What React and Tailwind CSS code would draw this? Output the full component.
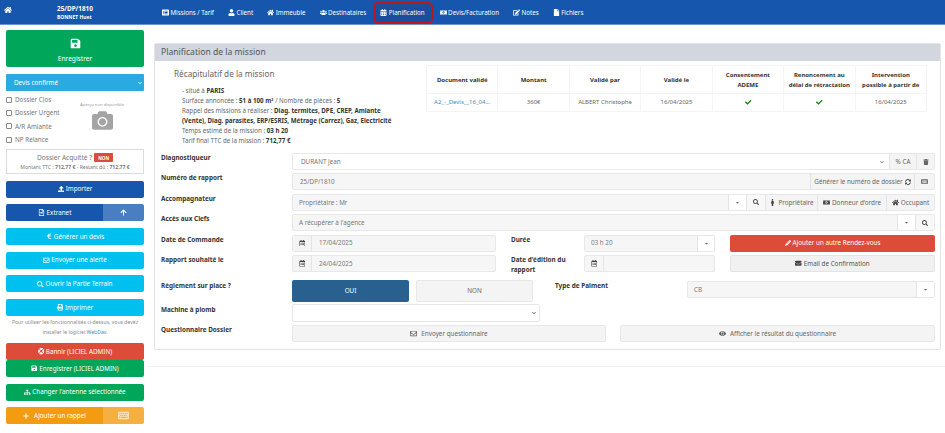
import React from "react";
import {
  FaHome, FaSave, FaCalendarAlt, FaUser, FaUsers, FaMoneyBillAlt, FaEdit, FaFile, FaUpload, FaRegFileAlt, FaListAlt,
  FaArrowUp, FaEuroSign, FaRegEnvelope, FaEnvelope, FaSearch, FaPrint, FaLifeRing, FaSitemap, FaPlus,
  FaTrash, FaSyncAlt, FaKeyboard, FaMale, FaCaretDown, FaChevronDown, FaPencilAlt, FaEye, FaCheck, FaCamera,
  FaRegCalendarAlt,
} from "react-icons/fa";

const font = { fontFamily: '"Noto Sans", "Open Sans", sans-serif' };

function NavItem({ icon: Icon, label, active }) {
  return (
    <div className={"flex items-center gap-[1.5px] h-[22px] pl-[5px] rounded-[5px] border-2 " + (active ? "pr-[6px] border-[#c0151f] bg-[#1a4f9e]" : "pr-[5px] border-transparent")}>
      <Icon className="text-[7px]" />
      <span>{label}</span>
    </div>
  );
}

function SideBtn({ color, icon: Icon, children, className = "mt-[6.7px]" }) {
  return (
    <div className={"h-[17px] flex items-center justify-center gap-[1.5px] rounded-[2px] text-white text-[6.3px] " + color + " " + className}>
      {Icon && <Icon className="text-[6.5px]" />}
      <span>{children}</span>
    </div>
  );
}

function Check({ label }) {
  return (
    <label className="flex items-center gap-[3px] h-[13.3px] text-[6.3px] text-[#777]">
      <span className="w-[6px] h-[6px] border border-[#888] rounded-[1px] bg-white" />
      {label}
    </label>
  );
}

function Field({ children, className = "" }) {
  return <div className={"h-[17px] flex items-center border border-[#e8e8ea] bg-[#f6f6f7] rounded-[2px] text-[6.3px] text-[#777] " + className}>{children}</div>;
}

function Addon({ children, className = "" }) {
  return <div className={"h-full flex items-center justify-center gap-[2px] border-l border-[#e4e4e6] text-[#666] shrink-0 " + className}>{children}</div>;
}

function Label({ children, className = "" }) {
  return <div className={"font-bold text-[6.4px] leading-[10px] text-[#333] " + className}>{children}</div>;
}

function Row({ label, children, className = "mt-[3.4px]", labelClass = "" }) {
  return (
    <div className={"flex " + className}>
      <Label className={"w-[131px] shrink-0 " + labelClass}>{label}</Label>
      <div className="flex-1 min-w-0">{children}</div>
    </div>
  );
}

const heads = [
  ["Document validé"],
  ["Montant"],
  ["Validé par"],
  ["Validé le"],
  ["Consentement", "ADEME"],
  ["Renoncement au", "délai de rétractation"],
  ["Intervention", "possible à partir de"],
];

const cell = "border border-[#f4f4f5]";

export default function App() {
  return (
    <div style={font} className="w-[945px] h-[433px] overflow-hidden bg-white text-[#666] relative">
      <header className="h-[25px] bg-[#1656ac] border-b border-[#6d94c8] text-white flex items-center text-[6.2px]">
        <FaHome className="ml-[4px] text-[8px] mb-[4px] shrink-0" />
        <div className="ml-[45px] w-[98px] font-bold shrink-0 leading-[9px] pt-[1px]">
          <div className="text-[6.4px]">25/DP/1810</div>
          <div className="text-[5px]">BONNET Huet</div>
        </div>
        <div className="flex items-center pt-[1px]">
          <NavItem icon={FaListAlt} label="Missions / Tarif" />
          <NavItem icon={FaUser} label="Client" />
          <NavItem icon={FaHome} label="Immeuble" />
          <NavItem icon={FaUsers} label="Destinataires" />
          <NavItem icon={FaCalendarAlt} label="Planification" active />
          <NavItem icon={FaMoneyBillAlt} label="Devis/Facturation" />
          <NavItem icon={FaEdit} label="Notes" />
          <NavItem icon={FaFile} label="Fichiers" />
        </div>
      </header>

      <div className="flex">
        <aside className="w-[138px] ml-[6px] shrink-0 pt-[5px]">
          <div className="h-[37px] bg-[#00a65a] rounded-[2px] text-white flex flex-col items-center justify-center gap-[6px] text-[6.6px]">
            <FaSave className="text-[11px] mt-[3px]" />
            <span className="leading-[8px]">Enregistrer</span>
          </div>
          <div className="mt-[7px] h-[17px] bg-[#29abe2] text-white text-[6.3px] flex items-center justify-between pl-[8px] pr-[2px] rounded-[1px]">
            <span>Devis confirmé</span>
            <FaChevronDown className="text-[4px]" />
          </div>
          <div className="flex mt-[2px] h-[54px]">
            <div className="w-[66px]">
              <Check label="Dossier Clos" />
              <Check label="Dossier Urgent" />
              <Check label="A/R Amiante" />
              <Check label="NP Relance" />
            </div>
            <div className="flex-1 flex flex-col items-center pt-[9px] text-[4.2px] leading-[6px] text-[#999]">
              <span className="-ml-[12px]">Aperçu non disponible</span>
              <FaCamera className="text-[21px] text-[#a4a4a4] mt-[2px] -ml-[12px]" />
            </div>
          </div>
          <div className="mt-[2px] h-[25px] border border-[#dcdcdc] flex flex-col items-center justify-center text-[#777]">
            <div className="flex items-center gap-[2px] text-[6.6px] leading-[10px]">
              Dossier Acquitté ?
              <span className="bg-[#dd4b39] text-white text-[4.5px] font-bold px-[4px] py-[1.5px] rounded-[1px] leading-[6px]">NON</span>
            </div>
            <div className="text-[5.1px] leading-[8px]">Montant TTC : <b>712,77 €</b> - Restant dû : <b>712,77 €</b></div>
          </div>
          <SideBtn color="bg-[#1656ac]" icon={FaUpload} className="mt-[6.5px]">Importer</SideBtn>
          <div className="mt-[6.7px] h-[17px] flex text-white text-[6.3px] rounded-[2px] overflow-hidden">
            <div className="w-[97px] bg-[#1656ac] flex items-center justify-center gap-[2px]"><FaRegFileAlt className="text-[7px]" />Extranet</div>
            <div className="flex-1 bg-[#4a7ec2] flex items-center justify-center"><FaArrowUp className="text-[7px]" /></div>
          </div>
          <SideBtn color="bg-[#00c0ef]" icon={FaEuroSign}>Générer un devis</SideBtn>
          <SideBtn color="bg-[#00c0ef]" icon={FaRegEnvelope}>Envoyer une alerte</SideBtn>
          <SideBtn color="bg-[#00c0ef]" icon={FaSearch}>Ouvrir la Partie Terrain</SideBtn>
          <SideBtn color="bg-[#00c0ef]" icon={FaPrint}>Imprimer</SideBtn>
          <div className="mt-[1px] text-center text-[5.1px] leading-[10px] text-[#888]">
            Pour utiliser les fonctionnalités ci-dessus, vous devez<br />installer le logiciel <span className="text-[#3c8dbc]">WebDav</span>.
          </div>
          <SideBtn color="bg-[#dd4b39]" icon={FaLifeRing} className="mt-[6px]">Bannir (LICIEL ADMIN)</SideBtn>
          <SideBtn color="bg-[#00a65a]" icon={FaSave} className="mt-0">Enregistrer (LICIEL ADMIN)</SideBtn>
          <SideBtn color="bg-[#00a65a]" icon={FaSitemap}>Changer l'antenne sélectionnée</SideBtn>
          <div className="mt-[6.7px] h-[17px] flex text-white text-[6.3px] rounded-[2px] overflow-hidden">
            <div className="w-[97px] bg-[#f39c12] flex items-center justify-center gap-[5px]"><FaPlus className="text-[6px]" />Ajouter un rappel</div>
            <div className="flex-1 bg-[#f5b041] flex items-center justify-center"><FaKeyboard className="text-[11px] text-[#fbe3b8]" /></div>
          </div>
        </aside>

        <main className="flex-1 min-w-0 pl-[4px]">
          <section className="ml-[6px] mr-[4px] mt-[18px] h-[307px] border border-[#e4e4e6] rounded-[2px]">
            <div className="h-[17px] bg-[#d2d6de] px-[6px] flex items-center text-[8.6px] text-[#555]">Planification de la mission</div>
            <div className="flex pt-[4px] h-[92px]">
              <div className="w-[271px] shrink-0 pl-[19px]">
                <div className="text-[8.2px] leading-[12px] mt-[3px] text-[#666]">Récapitulatif de la mission</div>
                <div className="pl-[8px] mt-[6px] text-[6.2px] leading-[9.9px] text-[#666] w-[230px]">
                  <div>- situé à <b className="text-[#333]">PARIS</b></div>
                  <div>Surface annoncée : <b className="text-[#333]">51 à 100 m²</b> / Nombre de pièces : <b className="text-[#333]">5</b></div>
                  <div>Rappel des missions à réaliser : <b className="text-[#333]">Diag. termites, DPE, CREP, Amiante (Vente), Diag. parasites, ERP/ESRIS, Métrage (Carrez), Gaz, Electricité</b></div>
                  <div>Temps estimé de la mission : <b className="text-[#333]">03 h 20</b></div>
                  <div>Tarif final TTC de la mission : <b className="text-[#333]">712,77 €</b></div>
                </div>
              </div>
              <table className="w-[501px] h-[47px] table-fixed border-collapse text-[6px] text-center self-start">
                <thead>
                  <tr className="h-[28px]">
                    {heads.map((h) => (
                      <th key={h[0]} className={cell + " font-bold text-[#333] leading-[10px] align-middle"}>
                        {h.map((l) => <div key={l}>{l}</div>)}
                      </th>
                    ))}
                  </tr>
                </thead>
                <tbody>
                  <tr className="text-[#666]">
                    <td className={cell + " text-[#3c8dbc]"}>A2_-_Devis__16_04...</td>
                    <td className={cell}>360€</td>
                    <td className={cell}>ALBERT Christophe</td>
                    <td className={cell}>16/04/2025</td>
                    <td className={cell}><FaCheck className="inline text-[6.5px] text-[#008000]" /></td>
                    <td className={cell}><FaCheck className="inline text-[6.5px] text-[#008000]" /></td>
                    <td className={cell}>16/04/2025</td>
                  </tr>
                </tbody>
              </table>
            </div>

            <div className="pl-[6px] pr-[5px]">
              <Row label="Diagnostiqueur" className="">
                <Field className="bg-white">
                  <span className="flex-1 pl-[8px]">DURANT Jean</span>
                  <FaChevronDown className="text-[4px] mr-[5px]" />
                  <Addon className="w-[27px] bg-[#f4f4f4]"><span>% CA</span></Addon>
                  <Addon className="w-[18px] bg-[#f4f4f4]"><FaTrash className="text-[6px]" /></Addon>
                </Field>
              </Row>
              <Row label="Numéro de rapport">
                <Field className="bg-[#eeeeee]">
                  <span className="flex-1 pl-[7px]">25/DP/1810</span>
                  <Addon className="w-[104px] bg-[#f4f4f4]"><span>Générer le numéro de dossier</span><FaSyncAlt className="text-[6px] text-[#444]" /></Addon>
                  <Addon className="w-[20px] bg-[#f4f4f4]"><FaKeyboard className="text-[7px]" /></Addon>
                </Field>
              </Row>
              <Row label="Accompagnateur">
                <Field>
                  <span className="flex-1 pl-[6px]">Propriétaire : Mr</span>
                  <Addon className="w-[18px] bg-white"><FaCaretDown className="text-[5px]" /></Addon>
                  <Addon className="w-[19px] bg-[#f8f8f8]"><FaSearch className="text-[6px] text-[#444]" /></Addon>
                  <Addon className="w-[52px] bg-[#f4f4f4]"><FaMale className="text-[7px] text-[#444]" />Propriétaire</Addon>
                  <Addon className="w-[69px] bg-[#f4f4f4]"><FaMoneyBillAlt className="text-[7px] text-[#444]" />Donneur d'ordre</Addon>
                  <Addon className="w-[48px] bg-[#f4f4f4]"><FaHome className="text-[7px] text-[#444]" />Occupant</Addon>
                </Field>
              </Row>
              <Row label="Accès aux Clefs">
                <Field>
                  <span className="flex-1 pl-[6px]">A récupérer à l'agence</span>
                  <Addon className="w-[18px] bg-white"><FaCaretDown className="text-[5px]" /></Addon>
                  <Addon className="w-[19px] bg-[#f8f8f8]"><FaSearch className="text-[6px] text-[#444]" /></Addon>
                </Field>
              </Row>
              <Row label="Date de Commande">
                <div className="flex">
                  <Field className="w-[204px]">
                    <div className="w-[19px] h-full flex items-center justify-center border-r border-[#e4e4e6] bg-[#f4f4f4]"><FaRegCalendarAlt className="text-[6.5px] text-[#444]" /></div>
                    <span className="pl-[7px]">17/04/2025</span>
                  </Field>
                  <Label className="w-[88px] pl-[15px]">Durée</Label>
                  <Field className="w-[131px]">
                    <span className="flex-1 pl-[6px]">03 h 20</span>
                    <Addon className="w-[17px] bg-white"><FaCaretDown className="text-[5px]" /></Addon>
                  </Field>
                  <div className="ml-[15px] w-[205px] h-[17px] bg-[#dd4b39] rounded-[2px] text-white text-[6.3px] flex items-center justify-center gap-[2px]"><FaPencilAlt className="text-[6px]" />Ajouter un autre Rendez-vous</div>
                </div>
              </Row>
              <Row label="Rapport souhaité le">
                <div className="flex">
                  <Field className="w-[204px]">
                    <div className="w-[19px] h-full flex items-center justify-center border-r border-[#e4e4e6] bg-[#f4f4f4]"><FaRegCalendarAlt className="text-[6.5px] text-[#444]" /></div>
                    <span className="pl-[7px]">24/04/2025</span>
                  </Field>
                  <Label className="w-[88px] pl-[15px]">Date d'édition du rapport</Label>
                  <Field className="w-[131px]">
                    <div className="w-[19px] h-full flex items-center justify-center border-r border-[#e4e4e6]"><FaRegCalendarAlt className="text-[6.5px] text-[#444]" /></div>
                  </Field>
                  <div className="ml-[15px] w-[205px] h-[17px] bg-[#f1f1f1] border border-[#e4e4e6] rounded-[2px] text-[#555] text-[6.3px] flex items-center justify-center gap-[2px]"><FaEnvelope className="text-[6.5px] text-[#444]" />Email de Confirmation</div>
                </div>
              </Row>
              <Row label="Règlement sur place ?" className="mt-[5px]" labelClass="pt-[1px]">
                <div className="flex">
                  <div className="w-[117px] h-[22px] bg-[#286090] rounded-[2px] text-white text-[6.3px] flex items-center justify-center">OUI</div>
                  <div className="ml-[7px] w-[117px] h-[22px] bg-[#f4f4f4] border border-[#e8e8ea] rounded-[2px] text-[#666] text-[6.3px] flex items-center justify-center">NON</div>
                  <Label className="w-[154px] pl-[22px] pt-[1px]">Type de Paiment</Label>
                  <Field className="w-[248px] mt-[1px]">
                    <span className="flex-1 pl-[6px]">CB</span>
                    <Addon className="w-[18px] bg-white"><FaCaretDown className="text-[5px]" /></Addon>
                  </Field>
                </div>
              </Row>
              <Row label="Machine à plomb" className="mt-[2px]" labelClass="pt-[1px]">
                <div className="w-[248px] h-[18px] border border-[#e8e8ea] bg-white rounded-[2px] flex items-center justify-end pr-[3px]">
                  <FaChevronDown className="text-[4px] text-[#555]" />
                </div>
              </Row>
              <Row label="Questionnaire Dossier">
                <div className="flex gap-[14px] text-[6.3px] text-[#666]">
                  <div className="w-[314px] h-[17px] bg-[#f4f4f4] border border-[#e8e8ea] rounded-[2px] flex items-center justify-center gap-[4px]"><FaRegEnvelope className="text-[7px] text-[#555]" />Envoyer questionnaire</div>
                  <div className="w-[315px] h-[17px] bg-[#f4f4f4] border border-[#e8e8ea] rounded-[2px] flex items-center justify-center gap-[4px]"><FaEye className="text-[7px] text-[#555]" />Afficher le résultat du questionnaire</div>
                </div>
              </Row>
            </div>
          </section>
          <div className="mt-[16px] border-t border-[#f0f0f0]" />
        </main>
      </div>
    </div>
  );
}
